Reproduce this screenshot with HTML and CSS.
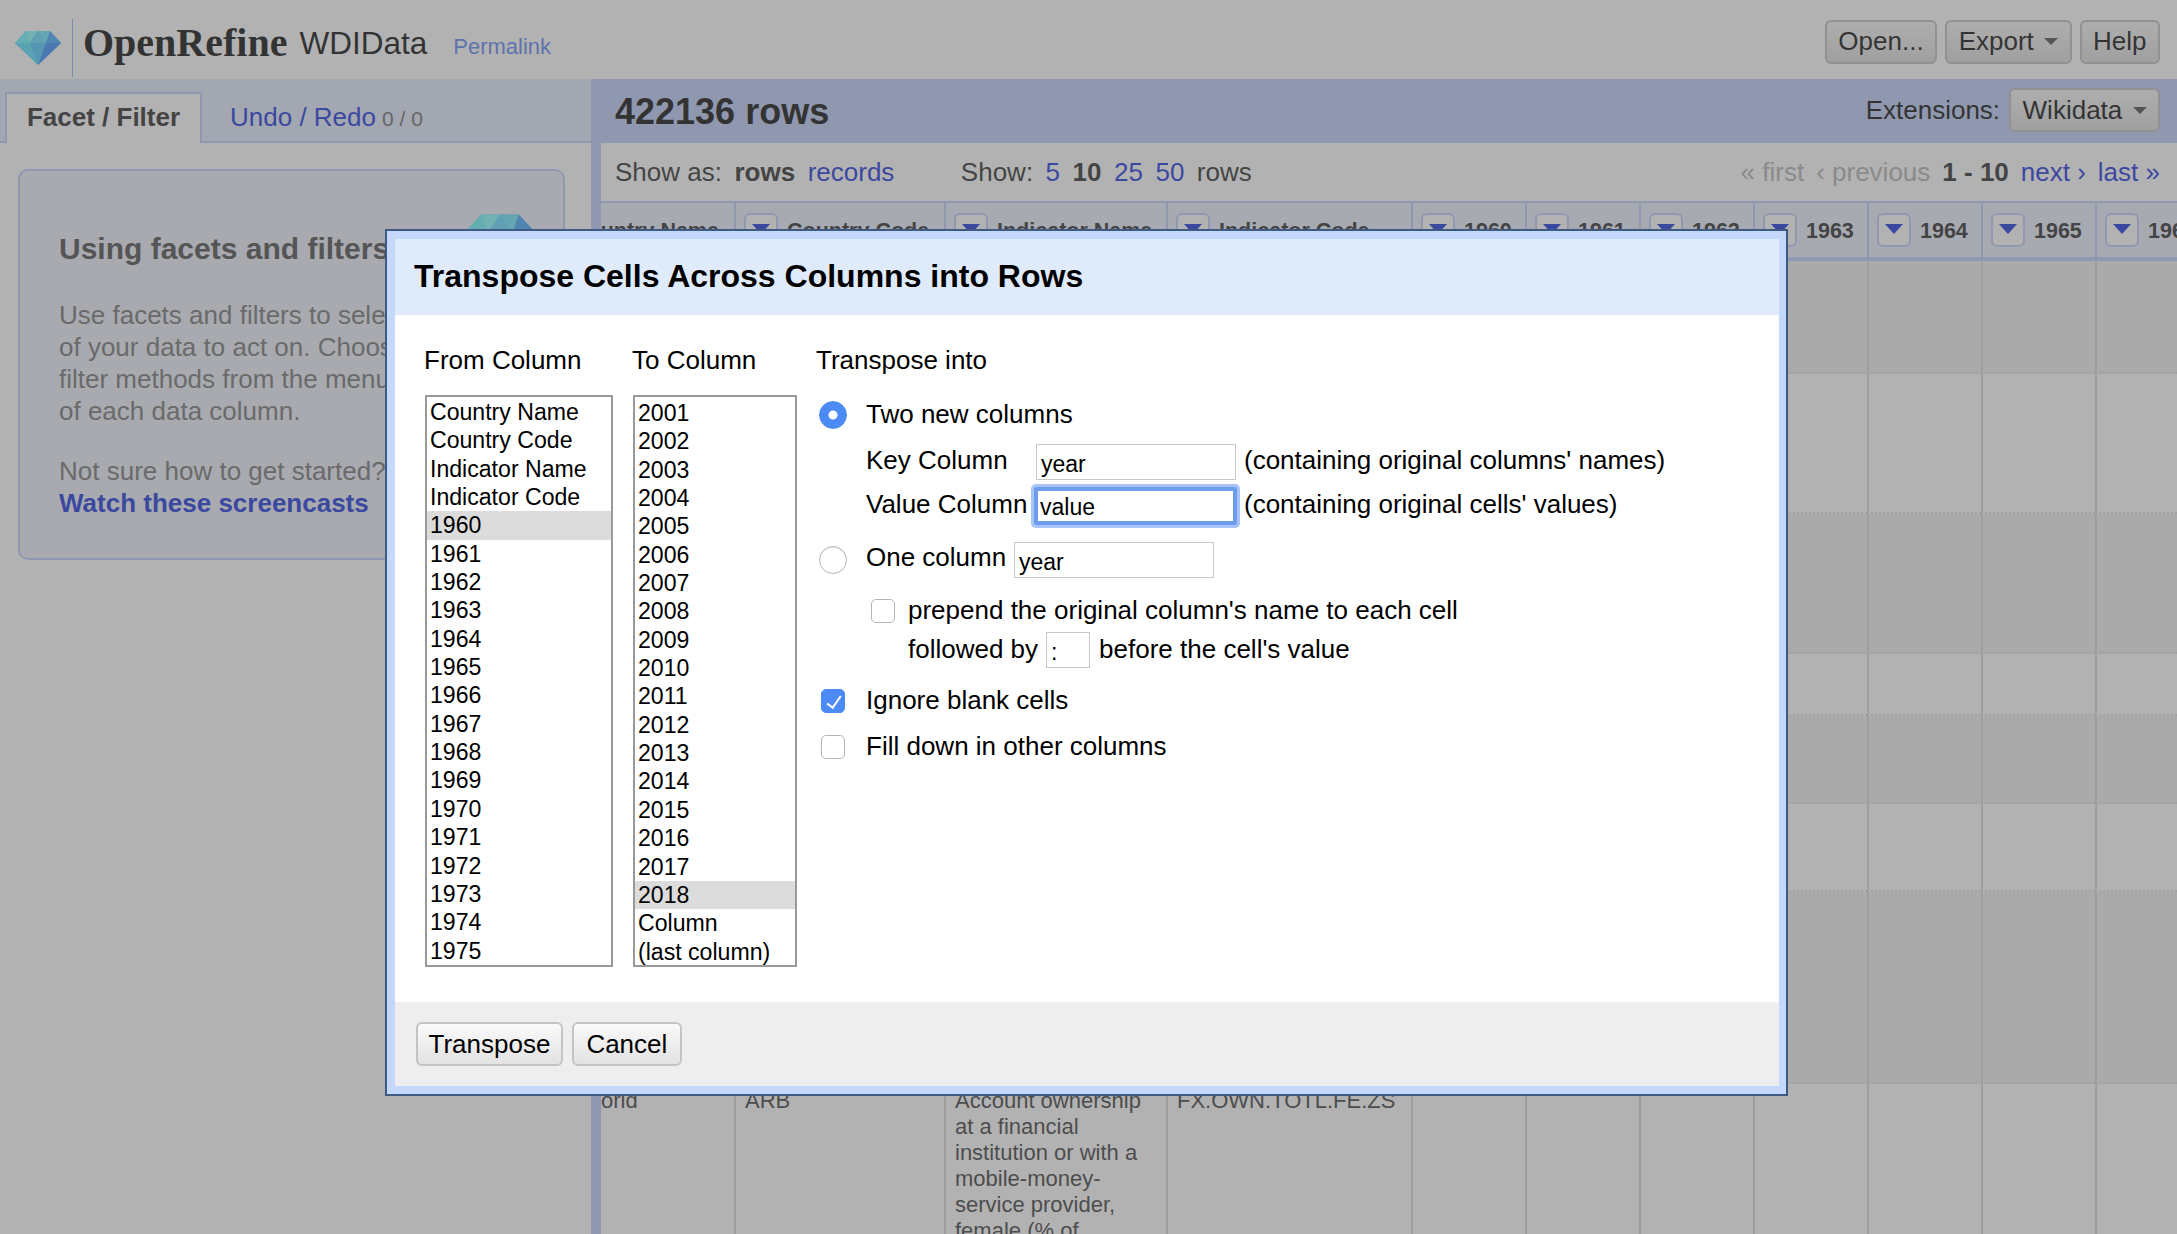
FILE: index.html
```html
<!DOCTYPE html>
<html lang="en">
<head>
    <meta charset="UTF-8">
    <title>WDIData - OpenRefine</title>
    <link rel="stylesheet" href="styles.css">
</head>
<body>
    <header class="app-header">
        <svg class="logo" viewBox="0 0 46 34" width="46" height="34">
            <polygon points="11,0 35,0 46,12 23,34 0,12" fill="#44c6ff"/>
            <polygon points="0,12 11,0 15,12" fill="#62f8ff"/>
            <polygon points="11,0 23,0 15,12" fill="#80ffff"/>
            <polygon points="23,0 35,0 31,12" fill="#62e8ff"/>
            <polygon points="15,12 23,0 31,12" fill="#5cd8ff"/>
            <polygon points="35,0 46,12 31,12" fill="#3aa4ff"/>
            <polygon points="0,12 15,12 23,34" fill="#4ee0ff"/>
            <polygon points="31,12 46,12 23,34" fill="#308aff"/>
        </svg>
        <div class="logo-divider"></div>
        <div class="project-title">
            <span class="brand">OpenRefine</span>
            <span class="project-name">WDIData</span>
            <a class="permalink">Permalink</a>
        </div>
        <div class="header-buttons">
            <button class="btn">Open...</button>
            <button class="btn">Export <i class="caret"></i></button>
            <button class="btn">Help</button>
        </div>
    </header>

    <div class="app-main">
        <aside class="left-panel">
            <div class="tab-bar">
                <div class="tab">Facet / Filter</div>
                <a class="tab-link">Undo / Redo</a>
                <span class="tab-count">0 / 0</span>
            </div>
            <div class="help-card">
                <svg class="help-logo" viewBox="0 0 46 34" width="72" height="54">
                    <polygon points="11,0 35,0 46,12 23,34 0,12" fill="#44c6ff"/>
                    <polygon points="0,12 11,0 15,12" fill="#62f8ff"/>
                    <polygon points="11,0 23,0 15,12" fill="#80ffff"/>
                    <polygon points="23,0 35,0 31,12" fill="#62e8ff"/>
                    <polygon points="15,12 23,0 31,12" fill="#5cd8ff"/>
                    <polygon points="35,0 46,12 31,12" fill="#3aa4ff"/>
                </svg>
                <h2 class="help-title">Using facets and filters</h2>
                <p class="help-text">Use facets and filters to select subsets<br>of your data to act on. Choose facet and<br>filter methods from the menus at the top<br>of each data column.</p>
                <p class="help-text">Not sure how to get started?<br><a class="help-link">Watch these screencasts</a></p>
            </div>
        </aside>

        <section class="right-panel">
            <div class="summary-bar">
                <h1 class="row-count">422136 rows</h1>
                <div class="extensions">
                    <span>Extensions:</span>
                    <button class="btn">Wikidata <i class="caret"></i></button>
                </div>
            </div>
            <div class="view-panel">
                <div class="view-controls">
                    <span>Show as:</span>
                    <b>rows</b>
                    <a>records</a>
                    <span class="show-label">Show:</span>
                    <a>5</a>
                    <b>10</b>
                    <a>25</a>
                    <a>50</a>
                    <span>rows</span>
                    <div class="pager">
                        <span class="off">&laquo; first</span>
                        <span class="off">&lsaquo; previous</span>
                        <b>1 - 10</b>
                        <a>next &rsaquo;</a>
                        <a>last &raquo;</a>
                    </div>
                </div>
                <div class="table-wrap">
                    <table class="data-table">
                        <colgroup>
                            <col class="c-name"><col class="c-code"><col class="c-ind"><col class="c-indcode">
                            <col class="c-year"><col class="c-year"><col class="c-year"><col class="c-year">
                            <col class="c-year"><col class="c-year"><col class="c-year">
                        </colgroup>
                        <thead>
                            <tr>
                                <th><div class="th-in"><i class="col-menu"></i>Country Name</div></th>
                                <th><div class="th-in"><i class="col-menu"></i>Country Code</div></th>
                                <th><div class="th-in"><i class="col-menu"></i>Indicator Name</div></th>
                                <th><div class="th-in"><i class="col-menu"></i>Indicator Code</div></th>
                                <th><div class="th-in"><i class="col-menu"></i>1960</div></th>
                                <th><div class="th-in"><i class="col-menu"></i>1961</div></th>
                                <th><div class="th-in"><i class="col-menu"></i>1962</div></th>
                                <th><div class="th-in"><i class="col-menu"></i>1963</div></th>
                                <th><div class="th-in"><i class="col-menu"></i>1964</div></th>
                                <th><div class="th-in"><i class="col-menu"></i>1965</div></th>
                                <th><div class="th-in"><i class="col-menu"></i>1966</div></th>
                            </tr>
                        </thead>
                        <tbody>
                            <tr class="odd r1"><td></td><td></td><td></td><td></td><td></td><td></td><td></td><td></td><td></td><td></td><td></td></tr>
                            <tr class="r2"><td></td><td></td><td></td><td></td><td></td><td></td><td></td><td></td><td></td><td></td><td></td></tr>
                            <tr class="odd r3"><td></td><td></td><td></td><td></td><td></td><td></td><td></td><td></td><td></td><td></td><td></td></tr>
                            <tr class="r4"><td></td><td></td><td></td><td></td><td></td><td></td><td></td><td></td><td></td><td></td><td></td></tr>
                            <tr class="odd r5"><td></td><td></td><td></td><td></td><td></td><td></td><td></td><td></td><td></td><td></td><td></td></tr>
                            <tr class="r6"><td></td><td></td><td></td><td></td><td></td><td></td><td></td><td></td><td></td><td></td><td></td></tr>
                            <tr class="odd r7"><td></td><td></td><td></td><td></td><td></td><td></td><td></td><td></td><td></td><td></td><td></td></tr>
                            <tr>
                                <td>Arab World</td>
                                <td>ARB</td>
                                <td>Account ownership at a financial institution or with a mobile-money-service provider, female (% of population ages 15+)</td>
                                <td>FX.OWN.TOTL.FE.ZS</td>
                                <td></td><td></td><td></td><td></td><td></td><td></td><td></td>
                            </tr>
                        </tbody>
                    </table>
                </div>
            </div>
        </section>
    </div>

    <div class="overlay"></div>

    <div class="dialog">
        <div class="dialog-header">Transpose Cells Across Columns into Rows</div>
        <div class="dialog-body">
            <div class="from-col">
                <div class="col-label">From Column</div>
                <ul class="column-list">
                    <li>Country Name</li><li>Country Code</li><li>Indicator Name</li><li>Indicator Code</li>
                    <li class="selected">1960</li><li>1961</li><li>1962</li><li>1963</li><li>1964</li><li>1965</li>
                    <li>1966</li><li>1967</li><li>1968</li><li>1969</li><li>1970</li><li>1971</li>
                    <li>1972</li><li>1973</li><li>1974</li><li>1975</li>
                </ul>
            </div>
            <div class="to-col">
                <div class="col-label">To Column</div>
                <ul class="column-list to-list">
                    <li>2001</li><li>2002</li><li>2003</li><li>2004</li><li>2005</li><li>2006</li>
                    <li>2007</li><li>2008</li><li>2009</li><li>2010</li><li>2011</li><li>2012</li>
                    <li>2013</li><li>2014</li><li>2015</li><li>2016</li><li>2017</li>
                    <li class="selected">2018</li><li>Column</li><li>(last column)</li>
                </ul>
            </div>
            <div class="options">
                <div class="col-label">Transpose into</div>
                <label class="opt-row two-new"><input type="radio" name="into" checked><span>Two new columns</span></label>
                <div class="opt-row key-row">
                    <span class="field-label">Key Column</span>
                    <input class="text-field" type="text" value="year">
                    <span class="field-note">(containing original columns' names)</span>
                </div>
                <div class="opt-row value-row">
                    <span class="field-label">Value Column</span>
                    <input class="text-field focused" type="text" value="value">
                    <span class="field-note">(containing original cells' values)</span>
                </div>
                <label class="opt-row one-col">
                    <input type="radio" name="into">
                    <span class="one-label">One column</span>
                    <input class="text-field" type="text" value="year">
                </label>
                <label class="opt-row prepend"><input type="checkbox"><span>prepend the original column's name to each cell</span></label>
                <div class="opt-row followed">
                    <span>followed by</span>
                    <input class="text-field sep-field" type="text" value=":">
                    <span>before the cell's value</span>
                </div>
                <label class="opt-row ignore"><input type="checkbox" checked><span>Ignore blank cells</span></label>
                <label class="opt-row fill"><input type="checkbox"><span>Fill down in other columns</span></label>
            </div>
        </div>
        <div class="dialog-footer">
            <button class="dlg-btn">Transpose</button>
            <button class="dlg-btn">Cancel</button>
        </div>
    </div>
</body>
</html>
```

FILE: styles.css
```css
* {
    box-sizing: border-box;
}
html, body {
    margin: 0;
    height: 100%;
    overflow: hidden;
}
body {
    position: relative;
    font-family: "Liberation Sans", Arial, sans-serif;
    font-size: 26px;
    color: #000;
    background: #fff;
}
a {
    color: #0e2ada;
}
b {
    font-weight: bold;
}

/* top header */
.app-header {
    display: flex;
    align-items: center;
    height: 79px;
    padding: 0 17px 0 15px;
}
.logo {
    flex: none;
    margin-top: 17px;
}
.logo-divider {
    width: 1px;
    height: 58px;
    margin: 19px 10px 0 11px;
    background: #8aaeff;
    align-self: flex-start;
}
.project-title {
    display: flex;
    align-items: baseline;
    margin-top: 2px;
}
.brand {
    font-family: "Liberation Serif", serif;
    font-weight: bold;
    font-size: 40px;
    color: #000;
    transform: translateY(2px);
}
.project-name {
    margin-left: 12px;
    font-size: 31.5px;
}
.permalink {
    margin-left: 26px;
    font-size: 22px;
    color: #587ef0;
}
.header-buttons {
    display: flex;
    gap: 8px;
    margin-left: auto;
    margin-top: 4px;
}
.btn {
    display: flex;
    align-items: center;
    height: 44px;
    padding: 0 11.5px;
    font: 26px "Liberation Sans", Arial, sans-serif;
    color: #000;
    border: 2px solid #bcbcbc;
    border-radius: 6px;
    background: linear-gradient(#f6f6f6, #dadada);
    white-space: pre;
}
.caret {
    width: 0;
    height: 0;
    margin-left: 3px;
    border-style: solid;
    border-width: 7px 7px 0;
    border-color: #444 transparent transparent;
}

.app-main {
    display: flex;
    height: 1155px;
}

/* left side */
.left-panel {
    flex: none;
    width: 591px;
}
.tab-bar {
    display: flex;
    align-items: baseline;
    height: 64px;
    padding: 13px 0 0 5px;
    background: #e0e8fe;
    border-bottom: 2px solid #bacafa;
}
.tab {
    width: 197px;
    height: 51px;
    padding-top: 8px;
    text-align: center;
    font-weight: bold;
    color: #222;
    background: #fff;
    border: 2px solid #bacafa;
    border-bottom: 0;
}
.tab-link {
    margin-left: 28px;
    color: #0e2ada;
}
.tab-count {
    margin-left: 6px;
    font-size: 21px;
    color: #666;
}
.help-card {
    width: 547px;
    height: 391px;
    margin: 26px 0 0 18px;
    padding: 61px 20px 0 39px;
    background: #eaeefa;
    border: 2px solid #bacafa;
    border-radius: 10px;
}
.help-logo {
    float: right;
    margin: -18px 7px 0 0;
}
.help-title {
    margin: 0 0 33px;
    font-size: 30px;
    line-height: 34px;
    color: #444;
}
.help-text {
    margin: 0 0 28px;
    line-height: 32px;
    white-space: nowrap;
    color: #6e6e6e;
}
.help-link {
    font-weight: bold;
    color: #0e2ada;
}

/* right side */
.right-panel {
    flex: 1;
    min-width: 0;
}
.summary-bar {
    display: flex;
    align-items: center;
    justify-content: space-between;
    height: 64px;
    padding: 0 17px 0 24px;
    background: #bacafa;
}
.row-count {
    margin: 2px 0 0;
    font-size: 36px;
    color: #000;
}
.extensions {
    display: flex;
    align-items: center;
    gap: 9px;
    margin-top: -2px;
}
.view-panel {
    border-left: 10px solid #bacafa;
    height: 1091px;
    display: flex;
    flex-direction: column;
}
.view-controls {
    display: flex;
    flex: none;
    align-items: center;
    gap: 12.5px;
    height: 60px;
    padding: 0 17px 0 14px;
    border-bottom: 2px solid #bacafa;
    color: #222;
}
.show-label {
    margin-left: 54px;
}
.pager {
    display: flex;
    gap: 12px;
    margin-left: auto;
}
.off {
    color: #aeaeae;
}
.table-wrap {
    flex: 1;
    overflow: hidden;
}
.data-table {
    table-layout: fixed;
    width: 1693px;
    margin-left: -87px;
    border-collapse: separate;
    border-spacing: 0;
}
.c-name { width: 220px; }
.c-code { width: 210px; }
.c-ind { width: 222px; }
.c-indcode { width: 245px; }
.c-year { width: 114px; }
.data-table th {
    height: 58px;
    padding: 2px 0 0 8px;
    text-align: left;
    font-size: 21.5px;
    color: #222;
    background: #eaeefe;
    border-left: 2px solid #bacafa;
    border-bottom: 4px solid #bacafa;
    white-space: nowrap;
}
.data-table th:first-child {
    padding-left: 13px;
}
.th-in {
    display: flex;
    align-items: center;
    gap: 9px;
}
.col-menu {
    display: flex;
    flex: none;
    align-items: center;
    justify-content: center;
    width: 34px;
    height: 34px;
    margin-top: -2px;
    border: 2px solid #bacafa;
    border-radius: 6px;
    background: #fff;
}
.col-menu::after {
    content: "";
    border-style: solid;
    border-width: 10px 9px 0;
    border-color: #0e2ada transparent transparent;
    margin-top: -2px;
}
.data-table td {
    padding: 4px 8px 0 9px;
    vertical-align: top;
    font-size: 22px;
    line-height: 26px;
    color: #333;
    background: #fff;
    border-left: 2px solid #d6d6d6;
    border-bottom: 2px dotted #dadada;
}
.data-table td:first-child {
    padding-left: 12px;
}
.data-table .odd td {
    background: #eee;
}
.r1 { height: 113px; }
.r2 { height: 140px; }
.r3 { height: 140px; }
.r4 { height: 62px; }
.r5 { height: 88px; }
.r6 { height: 88px; }
.r7 { height: 192px; }

.overlay {
    position: absolute;
    inset: 0;
    background: #666;
    opacity: 0.5;
}

/* transpose dialog */
.dialog {
    position: absolute;
    left: 385px;
    top: 229px;
    display: flex;
    flex-direction: column;
    width: 1403px;
    height: 867px;
    padding: 8px 7px 8px 8px;
    background: #c4d8fb;
    border: 2px solid #3d5a85;
}
.dialog-header {
    flex: none;
    height: 76px;
    padding: 19px 0 0 19px;
    font-size: 32px;
    line-height: 36px;
    font-weight: bold;
    background: #dfeafb;
}
.dialog-body {
    display: flex;
    flex: 1;
    min-height: 0;
    padding: 30px 0 0 30px;
    background: #fff;
}
.from-col {
    width: 188px;
    margin-right: 20px;
}
.to-col {
    width: 164px;
    margin-right: 19px;
}
.col-label {
    height: 30px;
    margin-bottom: 20px;
    line-height: 30px;
    margin-left: -1px;
}
.column-list {
    height: 572px;
    margin: 0;
    padding: 1px 0 0;
    overflow: hidden;
    list-style: none;
    font-size: 23.1px;
    line-height: 28.35px;
    border: 2px solid #999;
}
.to-list {
    padding-top: 2px;
}
.column-list li {
    height: 28.35px;
    padding-left: 3px;
    white-space: nowrap;
}
.column-list .selected {
    background: #dcdcdc;
}
.options {
    flex: 1;
}
.options .col-label {
    margin: 0;
}
.opt-row {
    display: flex;
    align-items: center;
    white-space: nowrap;
}
.two-new span, .prepend span, .followed span, .ignore span, .fill span {
    margin-top: -2px;
}
.opt-row input[type="radio"] {
    appearance: none;
    flex: none;
    width: 28px;
    height: 28px;
    margin: 0 19px 0 3px;
    border: 1px solid #b4b4b4;
    border-radius: 50%;
    background: #fff;
    box-shadow: inset 0 1px 1px #e8e8e8;
}
.opt-row input[type="radio"]:checked {
    background: radial-gradient(circle, #fff 0 4px, #4c8bf5 5px);
    border-color: #4c8bf5;
    box-shadow: none;
}
.opt-row input[type="checkbox"] {
    appearance: none;
    position: relative;
    flex: none;
    width: 24px;
    height: 24px;
    margin: 0 21px 0 5px;
    border: 1px solid #b4b4b4;
    border-radius: 5px;
    background: #fff;
}
.opt-row input[type="checkbox"]:checked {
    background: #4c8bf5;
    border-color: #4c8bf5;
}
.opt-row input[type="checkbox"]:checked::after {
    content: "";
    position: absolute;
    left: 8px;
    top: 3px;
    width: 6px;
    height: 13px;
    border: solid #fff;
    border-width: 0 2px 2px 0;
    transform: rotate(35deg);
}
.text-field {
    flex: none;
    width: 200px;
    height: 36px;
    padding: 4px 4px 0;
    font: 23px "Liberation Sans", Arial, sans-serif;
    color: #000;
    background: #fff;
    border: 1px solid #c8c8c8;
}
.text-field.focused {
    width: 203px;
    height: 38px;
    margin: -1px -1px -1px -2px;
    padding: 2px 2px 0;
    border: 4px solid #6d9cec;
    border-radius: 2px;
    box-shadow: 0 0 0 3px #a6c4f7;
}
.two-new {
    margin-top: 26px;
    height: 28px;
}
.key-row {
    margin-top: 15px;
    padding-left: 50px;
}
.value-row {
    margin-top: 8px;
    padding-left: 50px;
}
.field-label {
    width: 170px;
    margin-top: -4px;
}
.field-note {
    margin: -4px 0 0 8px;
}
.one-col {
    margin-top: 18px;
}
.one-label {
    width: 148px;
    margin-top: -6px;
}
.prepend {
    margin: 21px 0 0 50px;
    height: 24px;
}
.prepend input[type="checkbox"] {
    margin: 0 13px 0 5px;
}
.followed {
    margin: 9px 0 0 92px;
}
.sep-field {
    width: 44px;
    margin: 0 9px 0 8px;
}
.ignore {
    margin-top: 21px;
    height: 24px;
}
.fill {
    margin-top: 22px;
    height: 24px;
}
.dialog-footer {
    display: flex;
    flex: none;
    gap: 9px;
    height: 84px;
    padding: 20px 0 0 21px;
    background: #eee;
}
.dlg-btn {
    height: 44px;
    padding: 0 10.5px;
    font: 26px "Liberation Sans", Arial, sans-serif;
    color: #000;
    border: 2px solid #c4c4c4;
    border-radius: 6px;
    background: linear-gradient(#fafafa, #e2e2e2);
}
.dlg-btn + .dlg-btn {
    padding: 0 12.5px;
}
```
